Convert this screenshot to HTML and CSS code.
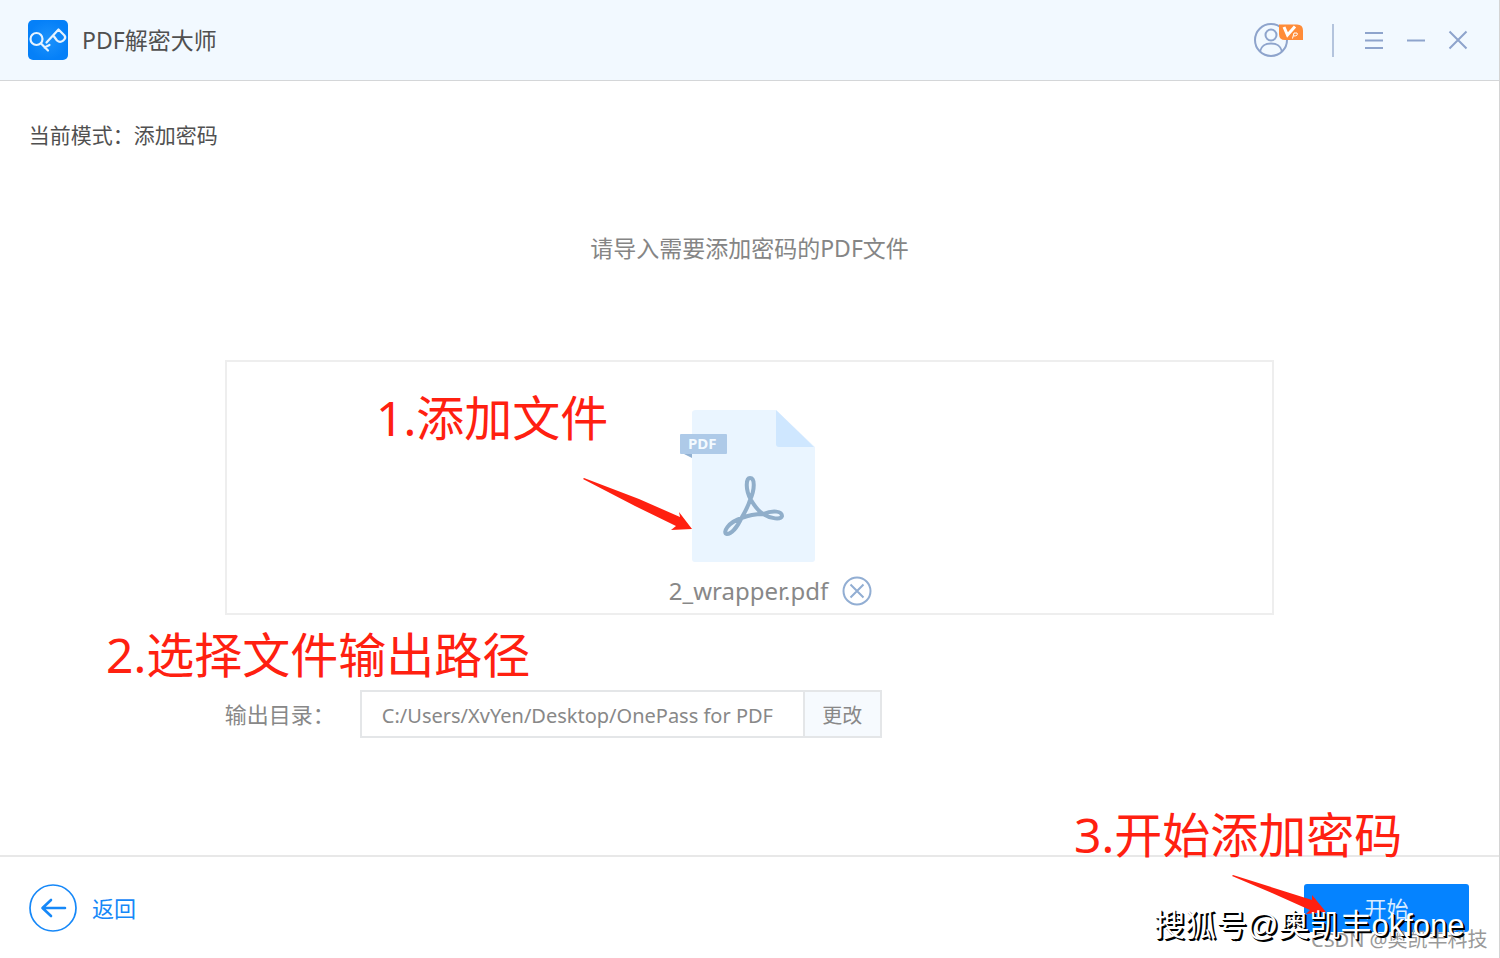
FILE: index.html
```html
<!DOCTYPE html>
<html lang="zh-CN">
<head>
<meta charset="utf-8">
<title>PDF解密大师</title>
<link rel="stylesheet" href="styles.css">
</head>
<body>
<div class="window">
  <header class="titlebar">
    <svg class="logo" viewBox="0 0 40 40" aria-hidden="true">
      <defs><radialGradient id="logo-fill"><stop offset="0" stop-color="#1c92fb"/><stop offset="1" stop-color="#0580f8"/></radialGradient></defs>
      <rect width="40" height="40" rx="5" fill="url(#logo-fill)"/>
      <g fill="none" stroke="#e6f3ff" stroke-width="2.200" stroke-linecap="round" stroke-linejoin="round">
        <circle cx="8.500" cy="19" r="6"/>
        <path d="M13 23.500L20 30.500M16.500 27.500L21.500 25M18.500 22.500L30.500 9.500L36.500 15.500C39 19 33 24 29 20.500L26 16.500"/>
      </g>
    </svg>
    <h1 class="app-name">PDF解密大师</h1>
    <div class="tools">
      <button class="tool account" aria-label="VIP">
        <svg width="50" height="36" viewBox="0 0 50 36">
          <circle cx="17" cy="18" r="16"/><circle cx="17" cy="13" r="5.500"/><path d="M6 29.500C8 22 13 21.500 17 21.500S26 22 28 29.500"/>
          <path class="vip-badge" d="M25 2.500H43Q49 2.500 49 8.500V18H31Q25 18 25 12Z"/>
          <path class="vip-v" d="M30 5L33.500 13L41 4.500"/><path class="vip-p" d="M38.500 16.500L40 11H43Q44.500 14 39.500 14"/>
        </svg>
      </button>
      <span class="divider"></span>
      <button class="tool" aria-label="菜单"><svg width="20" height="20" viewBox="0 0 20 20"><path d="M1 3H19M1 10.500H19M1 18H19"/></svg></button>
      <button class="tool" aria-label="最小化"><svg width="20" height="20" viewBox="0 0 20 20"><path d="M1 10.500H19"/></svg></button>
      <button class="tool" aria-label="关闭"><svg width="20" height="20" viewBox="0 0 20 20"><path d="M1.500 1.500L18.500 18.500M18.500 1.500L1.500 18.500"/></svg></button>
    </div>
  </header>

  <main class="content">
    <p class="mode">当前模式：添加密码</p>
    <p class="prompt">请导入需要添加密码的PDF文件</p>
    <section class="drop-area">
      <svg class="file-icon" width="136" height="154" viewBox="0 0 136 154" aria-hidden="true">
        <path d="M16 1H96L135 38V150Q135 153 132 153H15Q12 153 12 150V4Q12 1 16 1Z" fill="#eaf5ff"/>
        <path d="M96 1L134 38H99Q96 38 96 35Z" fill="#cfe7ff"/>
        <path d="M0 43L12 49V43Z" fill="#92b1d2"/>
        <rect y="25" width="47" height="20" rx="1" fill="#aecae8"/>
        <text class="file-badge" x="8" y="40">PDF</text>
        <path d="M71 91C65 80 66 69 70 69C75 69 75 80 70 91C68 98 65 103 62 108C57 119 51 125 47 125C42 124 48 113 62 109C69 106 76 105 83 105C93 101 102 102 102 107C101 111 91 110 83 105C78 102 74 96 71 91Z" fill="none" stroke="#90aeca" stroke-width="4" stroke-linejoin="round"/>
      </svg>
      <div class="file-row">
        <span class="file-name">2_wrapper.pdf</span>
        <button class="remove" aria-label="移除"><svg width="30" height="30" viewBox="0 0 30 30"><circle cx="15" cy="15" r="13.500"/><path d="M8.500 8.500L21.500 21.500M21.500 8.500L8.500 21.500"/></svg></button>
      </div>
    </section>
    <div class="output">
      <label class="output-label" for="output-path">输出目录：</label>
      <input class="output-path" id="output-path" type="text" readonly value="C:/Users/XvYen/Desktop/OnePass for PDF">
      <button class="change">更改</button>
    </div>
  </main>

  <footer class="actions">
    <button class="back">
      <svg width="48" height="48" viewBox="0 0 48 48"><circle cx="24" cy="24" r="23" stroke-width="1.700"/><path d="M36 24H14M22 16L13.500 24L22 32" stroke-width="2.600"/></svg>
      <span>返回</span>
    </button>
    <button class="start">开始</button>
  </footer>

  <span class="note note-add">1.添加文件</span>
  <span class="note note-path">2.选择文件输出路径</span>
  <span class="note note-start">3.开始添加密码</span>
  <svg class="arrow arrow-add" width="110" height="54" viewBox="0 0 110 54" aria-hidden="true"><path d="M1 0L56 21L97 39L96 34L109 51L88 52L93 48L52 28L0 1Z"/></svg>
  <svg class="arrow arrow-start" width="96" height="40" viewBox="0 0 96 40" aria-hidden="true"><path d="M1 0L80 25L80 20L94 37L74 39L78 35L40 18L0 1Z"/></svg>
  <span class="mark mark-csdn">CSDN @奥凯丰科技</span>
  <span class="mark mark-sohu">搜狐号@奥凯丰okfone</span>
</div>
</body>
</html>
```
FILE: styles.css
```css
* { box-sizing: border-box; }
body {
  margin: 0;
  font-family: "Noto Sans", "Noto Sans CJK SC", sans-serif;
  font-size: 22px;
  line-height: 32px;
  color: #505050;
  background: #fff;
}
h1, p { margin: 0; font-weight: 400; }
button, input { font: inherit; color: inherit; border: 0; border-radius: 0; background: none; padding: 0; margin: 0; }
button { cursor: pointer; }
svg { display: block; }

.window {
  position: relative;
  display: flex;
  flex-direction: column;
  min-height: 100vh;
  border-right: 1px solid #d4d4d4;
  overflow: hidden;
}
.titlebar {
  display: flex;
  align-items: center;
  height: 81px;
  padding: 0 31px 0 28px;
  background: #f2f9ff;
  border-bottom: 1px solid #d4d6d8;
}
.logo { width: 40px; height: 40px; }
.app-name { margin-left: 14px; font-size: 23px; }
.tools { display: flex; align-items: center; gap: 22px; margin-left: auto; }
.tool svg { fill: none; stroke: #8ea4cc; stroke-width: 2; }
.tool .vip-badge { fill: #ff8c38; stroke: none; }
.tool .vip-v { stroke: #fff; stroke-width: 3; }
.tool .vip-p { stroke: #fff; stroke-width: 1; }
.divider { width: 2px; height: 33px; margin: 0 8px 0 6px; background: #b4c4dd; }

.content { flex: 1; display: flex; flex-direction: column; padding: 0 15%; }
.mode { align-self: flex-start; margin: 38px 0 0 -196px; font-size: 21px; }
.prompt { margin-top: 81px; font-size: 23px; text-align: center; color: #858585; }
.drop-area {
  display: flex;
  flex-direction: column;
  align-items: center;
  height: 255px;
  margin-top: 96px;
  padding: 47px 4px 0 0;
  border: 2px solid #eee;
}
.file-badge { font: 700 15px/20px "Noto Sans", sans-serif; fill: #f4faff; }
.file-row { display: flex; align-items: center; gap: 14px; margin: 12px 0 0 46px; color: #888; }
.file-name { font-size: 24px; }
.remove svg { fill: none; stroke: #92aed3; stroke-width: 2; }

.output { display: flex; align-items: center; margin-top: 75px; color: #888; }
.output-label { width: 135px; white-space: nowrap; }
.output-path { width: 445px; height: 48px; padding: 2px 20px 0; border: 2px solid #e4e6e8; font-size: 20px; }
.change { width: 77px; height: 48px; padding-top: 4px; border: 2px solid #e4e6e8; border-left: 0; background: #f6fafe; font-size: 20px; }

.actions {
  display: flex;
  align-items: center;
  justify-content: space-between;
  height: 103px;
  padding: 0 30px 0 29px;
  border-top: 2px solid #e8e8e8;
}
.back { display: flex; align-items: center; gap: 15px; color: #1688f8; }
.back svg { fill: none; stroke: #1688f8; stroke-linecap: round; stroke-linejoin: round; }
.start { width: 165px; height: 48px; border-radius: 3px; background: #0583ff; color: #d8ecff; }

.note { position: absolute; font-size: 48px; line-height: 64px; color: #ff2010; white-space: nowrap; }
.note-add { left: 376px; top: 386px; }
.note-path { left: 106px; top: 623px; }
.note-start { left: 1074px; top: 803px; }
.arrow { position: absolute; fill: #ff2010; }
.arrow-add { left: 583px; top: 478px; }
.arrow-start { left: 1232px; top: 875px; }
.mark { position: absolute; white-space: nowrap; }
.mark-csdn { left: 1311px; top: 924px; font-size: 20px; color: #999; }
.mark-sohu { left: 1154px; top: 906px; font-family: "Liberation Sans", "Noto Sans CJK SC", sans-serif; font-size: 31px; line-height: 40px; color: #fff; text-shadow: 1px 1px 0 #000, 2px 2px 0 #000; }
```
